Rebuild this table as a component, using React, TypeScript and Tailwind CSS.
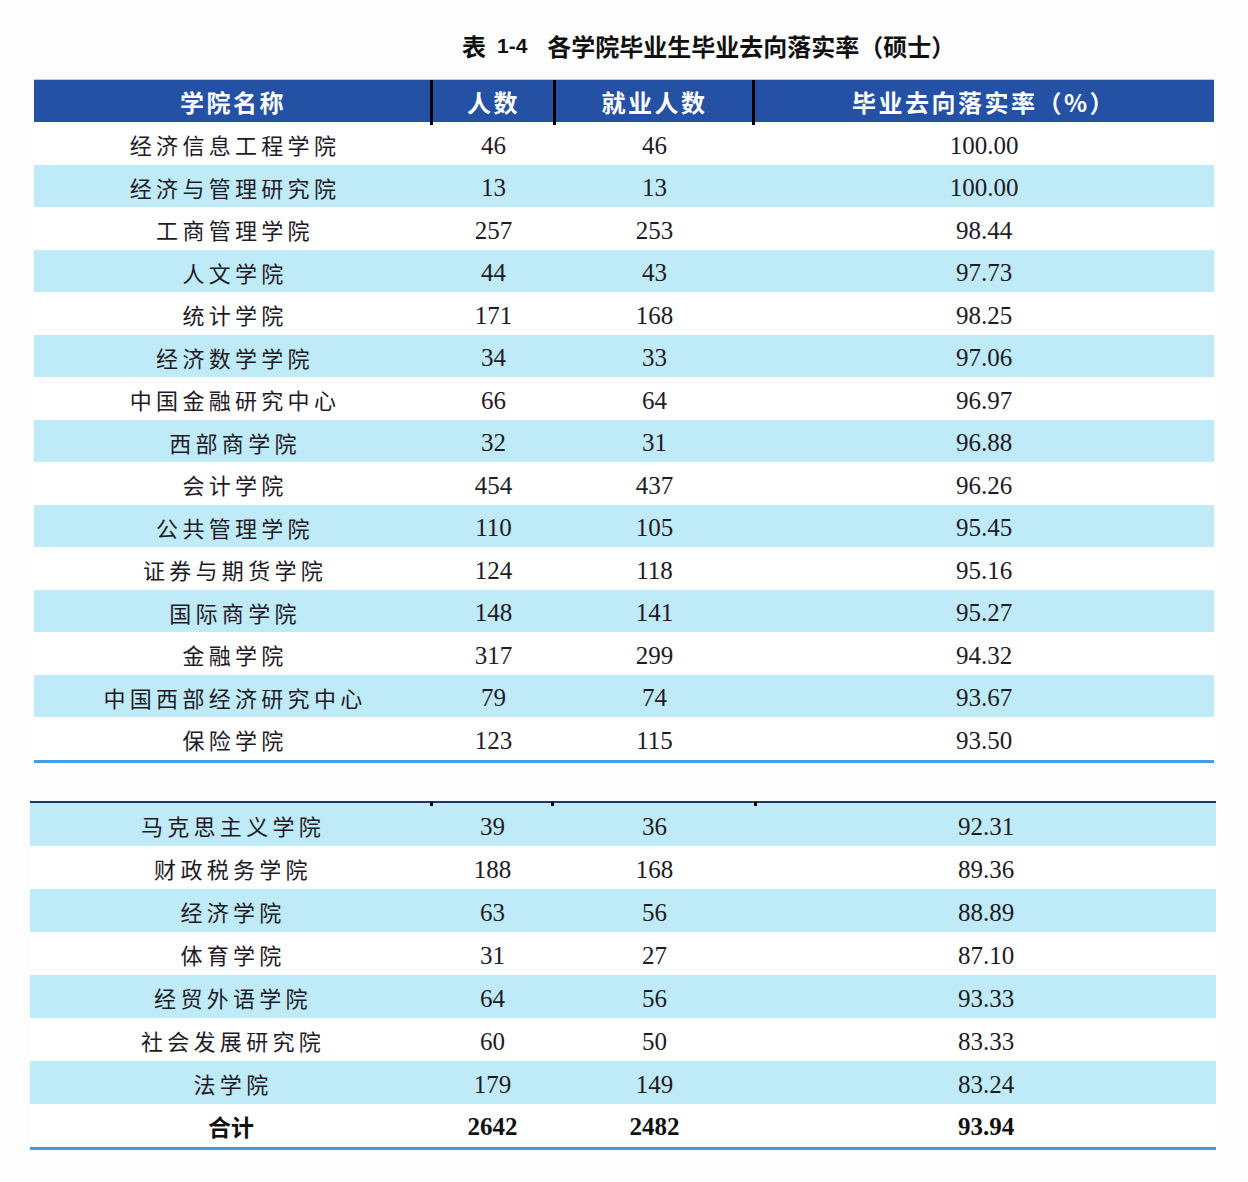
import React from "react";

const CJK = "font-['Noto_Sans_CJK_SC','Noto_Sans',sans-serif]";
const SERIF = "font-['Liberation_Serif','Times_New_Roman',serif]";

type Row = [string, string, string, string];

const top: Row[] = [
  ["经济信息工程学院", "46", "46", "100.00"],
  ["经济与管理研究院", "13", "13", "100.00"],
  ["工商管理学院", "257", "253", "98.44"],
  ["人文学院", "44", "43", "97.73"],
  ["统计学院", "171", "168", "98.25"],
  ["经济数学学院", "34", "33", "97.06"],
  ["中国金融研究中心", "66", "64", "96.97"],
  ["西部商学院", "32", "31", "96.88"],
  ["会计学院", "454", "437", "96.26"],
  ["公共管理学院", "110", "105", "95.45"],
  ["证券与期货学院", "124", "118", "95.16"],
  ["国际商学院", "148", "141", "95.27"],
  ["金融学院", "317", "299", "94.32"],
  ["中国西部经济研究中心", "79", "74", "93.67"],
  ["保险学院", "123", "115", "93.50"],
];

const bottom: Row[] = [
  ["马克思主义学院", "39", "36", "92.31"],
  ["财政税务学院", "188", "168", "89.36"],
  ["经济学院", "63", "56", "88.89"],
  ["体育学院", "31", "27", "87.10"],
  ["经贸外语学院", "64", "56", "93.33"],
  ["社会发展研究院", "60", "50", "83.33"],
  ["法学院", "179", "149", "83.24"],
];

function DataRow({ r, blue, cols, h }: { r: Row; blue: boolean; cols: string; h: string }) {
  return (
    <div className={`grid ${cols} ${h} ${blue ? "bg-[#bfeaf7]" : "bg-white"} text-[#1e1a26]`}>
      <div className={`flex items-center justify-center pt-[2px] pl-[4px] ${CJK} text-[22px] tracking-[4.3px] leading-none`}>
        {r[0]}
      </div>
      <div className={`flex items-center justify-center pt-[4px] ${SERIF} text-[25px] leading-none`}>{r[1]}</div>
      <div className={`flex items-center justify-center pt-[4px] ${SERIF} text-[25px] leading-none`}>{r[2]}</div>
      <div className={`flex items-center justify-center pt-[4px] ${SERIF} text-[25px] leading-none`}>{r[3]}</div>
    </div>
  );
}

function HeadCell({ text, sep }: { text: string; sep: boolean }) {
  return (
    <div className="relative flex items-center justify-center pt-[2px]">
      {sep && <div className="absolute left-[-2px] top-0 bottom-[-3px] w-[3px] bg-black" />}
      <span className={`${CJK} text-[24px] font-bold text-white tracking-[2.5px] leading-none`}>{text}</span>
    </div>
  );
}

export default function App() {
  const topCols = "grid-cols-[398px_123px_199px_460px]";
  const botCols = "grid-cols-[402px_121px_203px_460px]";
  return (
    <div className="w-[1248px] h-[1182px] bg-[#fdfdfd]">
      <div className="h-[79px] pt-[31px] pl-[462px] flex items-start">
        <span className={`${CJK} font-bold text-[24px] leading-[30px] text-[#111]`}>表</span>
        <span className="ml-[11px] font-['Liberation_Sans',sans-serif] font-bold text-[21px] leading-[30px] text-[#111]">1-4</span>
        <span className={`ml-[20px] ${CJK} font-bold text-[24px] leading-[30px] text-[#111] tracking-[0px]`}>
          各学院毕业生毕业去向落实率（硕士）
        </span>
      </div>

      <div className="ml-[34px] w-[1180px]">
        <div className="h-[1px] bg-[#a9d2ee]" />
        <div className={`grid ${topCols} h-[42px] bg-[#2451a4] relative z-10`}>
          <HeadCell text="学院名称" sep={false} />
          <HeadCell text="人数" sep={true} />
          <HeadCell text="就业人数" sep={true} />
          <HeadCell text="毕业去向落实率（%）" sep={true} />
        </div>
        {top.map((r, i) => (
          <DataRow key={i} r={r} blue={i % 2 === 1} cols={topCols} h="h-[42.5px]" />
        ))}
        <div className="h-[3px] bg-[#4a9ae0]" />
      </div>

      <div className="h-[38px]" />

      <div className="ml-[30px] w-[1186px]">
        <div className="relative h-[2px] bg-[#22346e]">
          <div className="absolute left-[400px] top-[1px] w-[3px] h-[4px] bg-black" />
          <div className="absolute left-[521px] top-[1px] w-[3px] h-[4px] bg-black" />
          <div className="absolute left-[724px] top-[1px] w-[3px] h-[4px] bg-black" />
        </div>
        {bottom.map((r, i) => (
          <DataRow key={i} r={r} blue={i % 2 === 0} cols={botCols} h="h-[43px]" />
        ))}
        <div className={`grid ${botCols} h-[43px] bg-white text-[#111]`}>
          <div className={`flex items-center justify-center pt-[2px] ${CJK} text-[23px] font-bold leading-none`}>合计</div>
          <div className={`flex items-center justify-center pt-[2px] ${SERIF} text-[25px] font-bold leading-none`}>2642</div>
          <div className={`flex items-center justify-center pt-[2px] ${SERIF} text-[25px] font-bold leading-none`}>2482</div>
          <div className={`flex items-center justify-center pt-[2px] ${SERIF} text-[25px] font-bold leading-none`}>93.94</div>
        </div>
        <div className="h-[3px] bg-[#4a9ae0]" />
      </div>
    </div>
  );
}
